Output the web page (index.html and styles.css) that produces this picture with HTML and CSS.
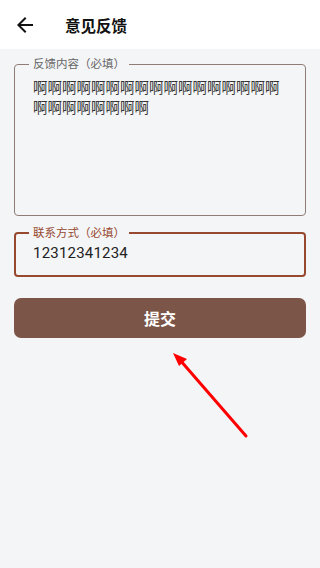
FILE: index.html
```html
<!DOCTYPE html>
<html>
<head>
<meta charset="UTF-8">
<link rel="stylesheet" href="styles.css">
</head>
<body>
<div class="header">
  <svg class="back" width="24" height="24" viewBox="0 0 24 24"><path d="M20 11H7.83l5.59-5.59L12 4l-8 8 8 8 1.41-1.41L7.83 13H20v-2z" fill="#111"/></svg>
  <h1 class="title">意见反馈</h1>
</div>

<div class="content">
  <fieldset class="field field-area">
    <legend>反馈内容（必填）</legend>
    <div class="value">啊啊啊啊啊啊啊啊啊啊啊啊啊啊啊啊啊啊啊啊啊啊啊啊啊</div>
  </fieldset>

  <fieldset class="field field-focus">
    <legend>联系方式（必填）</legend>
    <div class="value">12312341234</div>
  </fieldset>

  <button class="submit-btn">提交</button>
</div>

<svg class="pointer" width="100" height="110" viewBox="0 0 100 110">
  <line x1="86" y1="96" x2="20" y2="20" stroke="#f00" stroke-width="3" stroke-linecap="round"/>
  <polygon points="13,13 27,19 19,26" fill="#f00"/>
</svg>
</body>
</html>
```

FILE: styles.css
```css
* {
  box-sizing: border-box;
  margin: 0;
  padding: 0;
}

body {
  width: 320px;
  min-height: 568px;
  background: #f4f5f7;
  font-family: Roboto, "Noto Sans CJK SC", sans-serif;
  color: #222;
  position: relative;
}

.header {
  height: 49px;
  background: #fff;
  display: flex;
  align-items: center;
}

.back {
  margin-left: 13px;
}

.title {
  margin-left: 28px;
  font-size: 15.5px;
  font-weight: 700;
  color: #111;
}

.content {
  padding: 8px 14px 0 14px;
  display: flex;
  flex-direction: column;
}

.field {
  border: 1px solid #8f7c77;
  border-radius: 4px;
  padding: 0 12px 0 18px;
}

.field legend {
  font-size: 11.5px;
  color: #666;
  padding: 0 4px;
  margin-left: -4px;
  line-height: 14px;
}

.field-area {
  height: 159px;
}

.field-area .value {
  font-family: "Noto Sans CJK SC", sans-serif;
  font-size: 14.5px;
  line-height: 20px;
  color: #333;
  margin-top: 6px;
}

.field-focus {
  margin-top: 10px;
  height: 51px;
  border: 2px solid #96492f;
  padding-left: 17px;
}

.field-focus legend {
  color: #96492f;
}

.field-focus .value {
  font-size: 15px;
  line-height: 20px;
  margin-top: 3px;
  letter-spacing: 0.2px;
}

.submit-btn {
  margin-top: 21px;
  height: 40px;
  border: none;
  border-radius: 7px;
  background: #7b5548;
  color: #fff;
  font-family: inherit;
  font-size: 16px;
  font-weight: 700;
}

.pointer {
  position: absolute;
  left: 160px;
  top: 340px;
}
```
